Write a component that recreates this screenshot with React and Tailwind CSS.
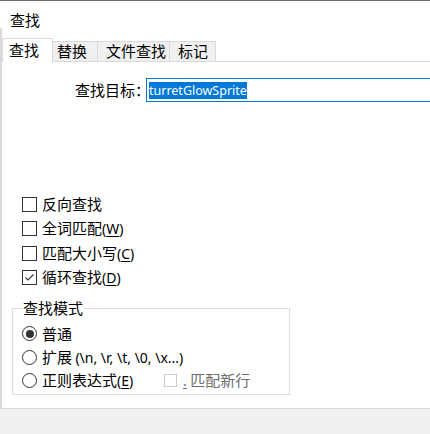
import React from "react";

const CheckBox = ({ checked, disabled }) => (
  <span
    className={`flex shrink-0 items-center justify-center bg-white ${
      disabled ? "h-[13px] w-[13px] border border-[#cccccc]" : "h-[15px] w-[15px] border border-[#333333]"
    }`}
  >
    {checked && (
      <svg width="13" height="13" viewBox="0 0 13 13">
        <polyline points="2.5,6.5 5,9 10.5,3.5" fill="none" stroke="#333333" strokeWidth="1.1" />
      </svg>
    )}
  </span>
);

const Radio = ({ checked }) => (
  <span className="flex h-[15px] w-[15px] shrink-0 items-center justify-center rounded-full border border-[#333333] bg-white">
    {checked && <span className="h-[8px] w-[8px] rounded-full bg-[#333333]" />}
  </span>
);

const Key = ({ k }) => (
  <span className="font-['Noto_Sans',sans-serif] text-[14px]">
    (<span className="underline underline-offset-2">{k}</span>)
  </span>
);

function Tab({ label, active, pl, w }) {
  if (active) {
    return (
      <div className={`-mb-px h-[24px] border-x border-t border-[#d9d9d9] bg-white leading-[22px] ${w} ${pl}`}>
        {label}
      </div>
    );
  }
  return (
    <div className={`h-[20px] border-r border-t border-[#d9d9d9] bg-[#f0f0f0] leading-[18px] ${w} ${pl}`}>
      {label}
    </div>
  );
}

export default function App() {
  const options = [
    { label: "反向查找" },
    { label: "全词匹配", k: "W" },
    { label: "匹配大小写", k: "C" },
    { label: "循环查找", k: "D", checked: true },
  ];

  return (
    <div className="flex h-[434px] w-[430px] flex-col overflow-hidden border-t border-[#6e6e6e] bg-white text-[15px] text-black font-['Noto_Sans_CJK_SC','Noto_Sans',sans-serif]">
      <div className="h-[27px] pl-[10px] pt-[10px] leading-[18px]">查找</div>

      <div className="flex flex-1 flex-col border-l-2 border-[#dadada] pt-[10px]">
        {/* tabs */}
        <div className="flex h-[24px] items-end border-b border-[#d9d9d9]">
          <Tab label="查找" active w="w-[51px]" pl="pl-[6px]" />
          <Tab label="替换" w="w-[45px]" pl="pl-[4px]" />
          <Tab label="文件查找" w="w-[72px]" pl="pl-[8px]" />
          <Tab label="标记" w="w-[46px]" pl="pl-[8px]" />
        </div>

        {/* search target */}
        <div className="mt-[16px] flex h-[24px] items-center">
          <div className="w-[144px] shrink-0 whitespace-nowrap pl-[73px] leading-[20px]">查找目标：</div>
          <div className="relative flex h-[24px] w-[300px] shrink-0 items-center border border-[#0078d7] bg-white pl-[2px]">
            <span className="bg-[#0078d7] font-['Noto_Sans',sans-serif] text-[12.5px] leading-[17px] text-white">
              turretGlowSprite
            </span>
          </div>
        </div>

        {/* options */}
        <div className="flex flex-col pl-[10px]">
          <div className="mt-[90px] flex flex-col pl-[10px]">
            {options.map((o) => (
              <div key={o.label} className="flex h-[24.5px] items-center gap-[5px] leading-[20px]">
                <CheckBox checked={o.checked} />
                <span>
                  {o.label}
                  {o.k && <Key k={o.k} />}
                </span>
              </div>
            ))}
          </div>

          <fieldset className="mt-[9px] h-[96px] w-[278px] border border-[#dcdcdc] pb-[1px] pl-[9px]">
            <legend className="px-[1px] leading-[18px]">查找模式</legend>
            <div className="mt-[5px] flex flex-col">
              <div className="flex h-[23.5px] items-center gap-[5px] leading-[20px]">
                <Radio checked />
                <span>普通</span>
              </div>
              <div className="flex h-[23.5px] items-center gap-[5px] leading-[20px]">
                <Radio />
                <span>
                  扩展{" "}
                  <span className="font-['Noto_Sans',sans-serif] text-[14px]">(\n, \r, \t, \0, \x...)</span>
                </span>
              </div>
              <div className="flex h-[23.5px] items-center gap-[5px] leading-[20px]">
                <Radio />
                <span className="w-[117px]">
                  正则表达式
                  <Key k="E" />
                </span>
                <CheckBox disabled />
                <span className="ml-[1px] text-[#6d6d6d]">
                  <span className="font-['Noto_Sans',sans-serif] text-[14px] underline underline-offset-2">.</span>{" "}
                  匹配新行
                </span>
              </div>
            </div>
          </fieldset>
        </div>
      </div>

      <div className="h-[26px] border-t border-[#dadada] bg-[#f0f0f0]" />
    </div>
  );
}
